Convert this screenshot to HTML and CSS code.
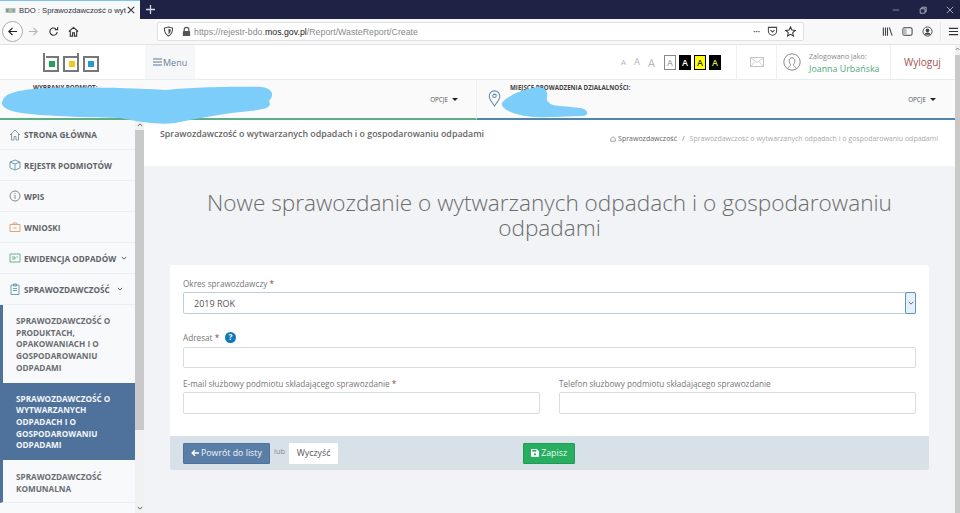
FILE: index.html
```html
<!DOCTYPE html>
<html lang="pl">
<head>
<meta charset="utf-8">
<title>BDO : Sprawozdawczość o wytwarzanych odpadach</title>
<link rel="stylesheet" href="styles.css">
</head>
<body>
<div class="browser-tabs">
  <div class="tab">
    <svg class="favicon" viewBox="0 0 12 6"><rect width="12" height="6" fill="#b7bcb8"/><rect x="1" y="1.5" width="2.5" height="3" fill="#5c9a78"/><rect x="4.7" y="1.5" width="2.5" height="3" fill="#d4c05c"/><rect x="8.5" y="1.5" width="2.5" height="3" fill="#6aa2c4"/></svg>
    <span class="tab-title">BDO : Sprawozdawczość o wyt</span>
    <svg class="tab-close" viewBox="0 0 10 10"><path d="M1 1l8 8M9 1l-8 8" stroke="#333" stroke-width="1.3"/></svg>
  </div>
  <svg class="new-tab" viewBox="0 0 10 10"><path d="M5 0v10M0 5h10" stroke="#d6d8e2" stroke-width="1.4"/></svg>
  <div class="window-controls">
    <svg viewBox="0 0 10 10"><path d="M1 5h8" stroke="#9a9dae" stroke-width="1"/></svg>
    <svg viewBox="0 0 10 10"><path d="M1.500 3.500h6v5.500h-6zM3.500 3.500v-2h5.500v5.500h-1.500" fill="none" stroke="#c6c8d4" stroke-width="1"/></svg>
    <svg viewBox="0 0 10 10"><path d="M1 1l8 8M9 1l-8 8" stroke="#c6c8d4" stroke-width="1"/></svg>
  </div>
</div>
<div class="browser-toolbar">
  <div class="nav-buttons">
    <span class="back-circle"><svg viewBox="0 0 12 12"><path d="M11 6H2M6 2L2 6l4 4" fill="none" stroke="#222" stroke-width="1.300"/></svg></span>
    <svg class="nav-icon" viewBox="0 0 12 12"><path d="M1 6h9M6 2l4 4-4 4" fill="none" stroke="#b5b5b5" stroke-width="1.200"/></svg>
    <svg class="nav-icon" viewBox="0 0 12 12"><path d="M10 6.500A4 4 0 1 1 8.500 3M10.500 1v3h-3" fill="none" stroke="#333" stroke-width="1.200"/></svg>
    <svg class="nav-icon" viewBox="0 0 12 12"><path d="M1 6l5-4.500L11 6M2.500 5.500V11h2.500V7.500h2V11h2.500V5.500" fill="none" stroke="#333" stroke-width="1.200"/></svg>
  </div>
  <div class="url-bar">
    <svg class="url-icon" viewBox="0 0 12 12"><path d="M6 1l4.500 1.200c0 4-1 6.800-4.500 8.800-3.500-2-4.500-4.800-4.500-8.800z" fill="none" stroke="#444" stroke-width="1.100"/><path d="M6 3l2.500.7c0 2.500-.7 3.900-2.500 5z" fill="#444"/></svg>
    <svg class="url-icon" viewBox="0 0 12 12"><path d="M3.500 5.500V4a2.500 2.500 0 0 1 5 0v1.500" fill="none" stroke="#555" stroke-width="1.300"/><rect x="2" y="5.500" width="8" height="5.500" rx="1" fill="#555"/></svg>
    <span class="url-text">https://rejestr-bdo.<b>mos.gov.pl</b>/Report/WasteReport/Create</span>
    <span class="url-end">
      <span class="dots">•••</span>
      <svg class="url-icon" viewBox="0 0 12 12"><path d="M1.500 1.500h9v4a4.500 4.500 0 0 1-9 0z" fill="none" stroke="#444" stroke-width="1.100"/><path d="M3.800 4.500L6 6.500l2.200-2" fill="none" stroke="#444" stroke-width="1.100"/></svg>
      <svg class="url-icon" viewBox="0 0 12 12"><path d="M6 1l1.500 3.400 3.700.4-2.800 2.400.8 3.600L6 9l-3.200 1.800.8-3.600L.8 4.800l3.700-.4z" fill="none" stroke="#333" stroke-width="1.100"/></svg>
    </span>
  </div>
  <div class="tool-icons">
    <svg viewBox="0 0 12 12"><path d="M1.500 1.500v9M3.800 1.500v9M6 1.500v9M8 1.500l3 9" fill="none" stroke="#444" stroke-width="1.200"/></svg>
    <svg viewBox="0 0 12 12"><rect x="1" y="2" width="10" height="8" rx="1.500" fill="none" stroke="#444" stroke-width="1.100"/><rect x="1.500" y="2.500" width="3.500" height="7" fill="#bbb"/></svg>
    <svg viewBox="0 0 12 12"><circle cx="6" cy="6" r="5" fill="none" stroke="#444" stroke-width="1"/><circle cx="6" cy="4.800" r="2" fill="#444"/><path d="M2.500 9.500a3.600 3 0 0 1 7 0z" fill="#444"/></svg>
    <i class="tool-sep"></i>
    <svg viewBox="0 0 12 12"><path d="M1 2.500h10M1 6h10M1 9.500h10" stroke="#333" stroke-width="1.300"/></svg>
  </div>
</div>

<div class="shell">
<div class="app">
<header class="app-header">
  <div class="logo-cell">
    <svg class="logo" viewBox="0 0 56 19">
      <path d="M1 0v18h14V4H3" fill="none" stroke="#777" stroke-width="2"/>
      <rect x="6" y="8" width="6" height="6" fill="#1fa35c"/>
      <path d="M35 0v18H21V4h14" fill="none" stroke="#777" stroke-width="2"/>
      <rect x="26" y="8" width="6" height="6" fill="#f7c81e"/>
      <rect x="41" y="4" width="14" height="14" fill="none" stroke="#777" stroke-width="2"/>
      <rect x="45" y="8" width="6" height="6" fill="#2799d6"/>
    </svg>
  </div>
  <div class="menu-btn">
    <svg viewBox="0 0 9 8"><path d="M0 1h9M0 4h9M0 7h9" stroke="#5f7994" stroke-width="1.200"/></svg>
    <span>Menu</span>
  </div>
  <div class="header-right">
    <div class="a11y">
      <span class="size-a s1">A</span><span class="size-a s2">A</span><span class="size-a s3">A</span>
      <span class="contrast c1">A</span><span class="contrast c2">A</span><span class="contrast c3">A</span><span class="contrast c4">A</span>
    </div>
    <div class="mail-cell">
      <svg viewBox="0 0 14 10"><rect x=".5" y=".5" width="13" height="9" fill="none" stroke="#c4c4c4"/><path d="M.5.500L7 5.500l6.500-5M.5 9.500L5 4.500M13.500 9.500L9 4.500" fill="none" stroke="#c4c4c4" stroke-width=".8"/></svg>
    </div>
    <div class="user-cell">
      <svg viewBox="0 0 18 18"><circle cx="9" cy="9" r="8.200" fill="none" stroke="#8a8a8a"/><path d="M5 15.500c.5-2 2.500-2.500 2.700-3.700-2.500-3-2-7 1.300-7s3.800 4 1.300 7c.2 1.200 2.200 1.700 2.700 3.700" fill="none" stroke="#8a8a8a"/></svg>
      <div class="user-text">
        <div class="user-label">Zalogowano jako:</div>
        <div class="user-name">Joanna Urbańska</div>
      </div>
    </div>
    <div class="logout">Wyloguj</div>
  </div>
</header>

<div class="context-row">
  <div class="context context-left">
    <span class="context-label label-subject">WYBRANY PODMIOT:</span>
    <span class="options">OPCJE <i class="caret"></i></span>
  </div>
  <div class="context context-right">
    <svg class="pin" viewBox="0 0 12 16"><path d="M6 15C3 10.500 1 8.500 1 5.800a5 5 0 0 1 10 0C11 8.500 9 10.500 6 15z" fill="none" stroke="#5f8fa8" stroke-width="1"/><circle cx="6" cy="5.500" r="1.600" fill="none" stroke="#5f8fa8"/></svg>
    <span class="context-label">MIEJSCE PROWADZENIA DZIAŁALNOŚCI:</span>
    <span class="options">OPCJE <i class="caret"></i></span>
  </div>
</div>

<div class="workspace">
  <nav class="sidebar">
    <a class="nav-item"><svg viewBox="0 0 12 12"><path d="M1 6l5-5 5 5M2.500 5v6h2.500V7.500h2V11h2.500V5" fill="none" stroke="#8a9aa8"/></svg><span>STRONA GŁÓWNA</span></a>
    <a class="nav-item"><svg viewBox="0 0 12 12"><path d="M6 1l5 2v6l-5 2-5-2V3zM1 3l5 2 5-2M6 5v6" fill="none" stroke="#6f9fb2"/></svg><span>REJESTR PODMIOTÓW</span></a>
    <a class="nav-item"><svg viewBox="0 0 12 12"><circle cx="6" cy="6" r="5" fill="none" stroke="#888"/><path d="M6 3v1M6 5v4" stroke="#888"/></svg><span>WPIS</span></a>
    <a class="nav-item"><svg viewBox="0 0 12 12"><path d="M1 3.500h10v7H1zM4 3.500V2h4v1.500M4.500 7h3" fill="none" stroke="#dda67c"/></svg><span>WNIOSKI</span></a>
    <a class="nav-item"><svg viewBox="0 0 12 12"><path d="M1 2h10v8H1zM3 5h3v2H3M7.500 5h1.500" fill="none" stroke="#6fb08c"/></svg><span>EWIDENCJA ODPADÓW</span><svg class="chev" viewBox="0 0 8 5"><path d="M1 1l3 3 3-3" fill="none" stroke="#555" stroke-width="1.300"/></svg></a>
    <a class="nav-item"><svg viewBox="0 0 12 12"><path d="M2 2h8v9.500H2zM4.500 1h3v2h-3zM4 5.500h4M4 7.500h4" fill="none" stroke="#6f9fb2"/></svg><span class="grow">SPRAWOZDAWCZOŚĆ</span><svg class="chev" viewBox="0 0 8 5"><path d="M1 1l3 3 3-3" fill="none" stroke="#555" stroke-width="1.300"/></svg></a>
    <div class="submenu">
      <a class="sub-item">SPRAWOZDAWCZOŚĆ O PRODUKTACH, OPAKOWANIACH I O GOSPODAROWANIU ODPADAMI</a>
      <a class="sub-item active">SPRAWOZDAWCZOŚĆ O WYTWARZANYCH ODPADACH I O GOSPODAROWANIU ODPADAMI</a>
      <a class="sub-item">SPRAWOZDAWCZOŚĆ KOMUNALNA</a>
    </div>
  </nav>
  <div class="side-scroll">
    <svg viewBox="0 0 8 5"><path d="M1 4l3-3 3 3" fill="none" stroke="#555" stroke-width="1.200"/></svg>
    <div class="side-thumb"></div>
    <svg viewBox="0 0 8 5"><path d="M1 1l3 3 3-3" fill="none" stroke="#555" stroke-width="1.200"/></svg>
  </div>
  <main class="content">
    <div class="page-bar">
      <div class="page-title">Sprawozdawczość o wytwarzanych odpadach i o gospodarowaniu odpadami</div>
      <div class="breadcrumb">
        <svg viewBox="0 0 8 8"><path d="M1 3.500L4 1l3 2.500V7H1z" fill="none" stroke="#666" stroke-width=".8"/></svg>
        <span class="crumb-link">Sprawozdawczość</span>
        <span class="crumb-sep">/</span>
        <span class="crumb-current">Sprawozdawczość o wytwarzanych odpadach i o gospodarowaniu odpadami</span>
      </div>
    </div>
    <div class="page-body">
      <h1>Nowe sprawozdanie o wytwarzanych odpadach i o gospodarowaniu odpadami</h1>
      <form class="card">
        <div class="card-fields">
          <div class="field">
            <label>Okres sprawozdawczy <em>*</em></label>
            <div class="select"><span>2019 ROK</span><span class="select-btn"><svg viewBox="0 0 8 5"><path d="M1 1l3 3 3-3" fill="none" stroke="#666" stroke-width="1.300"/></svg></span></div>
          </div>
          <div class="field field-addr">
            <label>Adresat <em>*</em><svg class="help" viewBox="0 0 12 12"><circle cx="6" cy="6" r="6" fill="#0f78b8"/><text x="6" y="9.200" text-anchor="middle" class="help-mark">?</text></svg></label>
            <div class="input"></div>
          </div>
          <div class="field-row">
            <div class="field">
              <label>E-mail służbowy podmiotu składającego sprawozdanie <em>*</em></label>
              <div class="input"></div>
            </div>
            <div class="field">
              <label>Telefon służbowy podmiotu składającego sprawozdanie</label>
              <div class="input"></div>
            </div>
          </div>
        </div>
        <div class="card-footer">
          <a class="btn btn-back"><svg viewBox="0 0 10 9"><path d="M10 4.500H2.500M5 1L1.500 4.500 5 8" fill="none" stroke="#fff" stroke-width="1.800"/></svg>Powrót do listy</a>
          <span class="or">lub</span>
          <a class="btn btn-clear">Wyczyść</a>
          <a class="btn btn-save"><svg viewBox="0 0 9 9"><path d="M0 1a1 1 0 0 1 1-1h5.500L9 2.500V8a1 1 0 0 1-1 1H1a1 1 0 0 1-1-1z" fill="#fff"/><rect x="1.500" y="1" width="4.500" height="2" fill="#27ae60"/><circle cx="4.500" cy="6" r="1.300" fill="#27ae60"/></svg>Zapisz</a>
        </div>
      </form>
    </div>
  </main>
</div>
</div>
<div class="page-scroll">
  <svg viewBox="0 0 8 5"><path d="M1 4l3-3 3 3" fill="none" stroke="#555" stroke-width="1.200"/></svg>
  <div class="page-thumb"></div>
</div>
</div>

<svg class="scribble" viewBox="0 0 960 130">
  <path d="M3 100C5 93 20 89 50 88C90 87 130 88 165 90C185 88 225 86 262 87C274 89 274 96 269 101C272 107 268 109 250 111C225 113 200 118 175 123C160 125 140 122 120 118C80 117 30 116 12 111C3 108 0 104 3 100Z" fill="#7ccdfa"/>
  <path d="M502 103C506 97 520 90 537 87C546 87 548 92 547 97C546 100 548 103 553 105C565 107 578 107 584 109C589 112 588 116 582 116C565 116 550 118 535 117C518 116 500 110 502 103Z" fill="#7ccdfa"/>
</svg>
</body>
</html>
```

FILE: styles.css
```css
* { box-sizing: border-box; }
html, body { margin: 0; padding: 0; }
body {
  position: relative;
  width: 960px;
  height: 513px;
  overflow: hidden;
  background: #fff;
  font-family: "Open Sans", "Liberation Sans", sans-serif;
  color: #555;
}
a { display: block; }

.browser-tabs {
  display: flex;
  align-items: center;
  height: 19px;
  background: #1e2346;
}
.tab {
  display: flex;
  align-items: center;
  width: 140px;
  height: 19px;
  padding: 1px 5px;
  background: #f7f8fa;
  border-top: 1px solid #7fc4ee;
  flex: none;
}
.favicon { width: 11px; height: 5px; margin-right: 3px; flex: none; }
.tab-title {
  flex: 1;
  white-space: nowrap;
  font-family: "Liberation Sans", sans-serif;
  font-size: 7.700px;
  color: #333;
}
.tab-close { width: 8px; height: 8px; flex: none; }
.new-tab { width: 9px; height: 9px; margin-left: 6px; flex: none; }
.window-controls {
  display: flex;
  gap: 19px;
  margin-left: auto;
  padding-right: 6px;
}
.window-controls svg { width: 8px; height: 8px; }

.browser-toolbar {
  display: flex;
  align-items: center;
  height: 26px;
  background: #f8f8f9;
  border-bottom: 1px solid #e3e3e5;
}
.nav-buttons {
  display: flex;
  align-items: center;
  gap: 6px;
  width: 157px;
  flex: none;
  padding-left: 2px;
}
.back-circle {
  display: flex;
  align-items: center;
  justify-content: center;
  width: 21px;
  height: 21px;
  margin-right: -1px;
  border: 1px solid #aaa;
  border-radius: 50%;
  background: #fff;
}
.back-circle svg { width: 11px; height: 11px; }
.nav-icon { width: 11px; height: 11px; margin-right: 3px; }
.url-bar {
  display: flex;
  align-items: center;
  gap: 7px;
  width: 647px;
  height: 19px;
  flex: none;
  padding: 0 4px 0 5px;
  background: #fff;
  border: 1px solid #e0e0e0;
  border-radius: 2px;
}
.url-icon { width: 11px; height: 11px; flex: none; }
.url-text {
  margin-left: -5px;
  font-family: "Liberation Sans", sans-serif;
  font-size: 8.800px;
  color: #8a8a8a;
  white-space: nowrap;
}
.url-text b { font-weight: 400; color: #222; }
.url-end {
  display: flex;
  align-items: center;
  gap: 7px;
  margin-left: auto;
  padding-right: 3px;
}
.dots { font-size: 6px; color: #444; letter-spacing: 0; }
.tool-icons {
  display: flex;
  align-items: center;
  gap: 9px;
  margin-left: 78px;
}
.tool-icons svg { width: 11px; height: 11px; flex: none; }
.tool-sep { width: 1px; height: 19px; background: #e6e6e6; margin: 0 -2px; }

.shell { display: flex; height: 468px; }
.app { width: 955px; flex: none; }

.app-header {
  display: flex;
  height: 35px;
  background: #fff;
  border-bottom: 1px solid #e9ecef;
}
.logo-cell {
  display: flex;
  align-items: center;
  justify-content: center;
  width: 145px;
}
.logo { width: 56px; height: 19px; margin-left: -3px; }
.menu-btn {
  display: flex;
  align-items: center;
  gap: 1px;
  width: 50px;
  padding-left: 8px;
  background: #f6f7f9;
  font-size: 9px;
  color: #6d8197;
}
.menu-btn svg { width: 9px; height: 8px; }
.header-right { display: flex; margin-left: auto; }
.a11y {
  display: flex;
  align-items: center;
  width: 122px;
  padding-left: 6px;
  border-right: 1px solid #f0f0f0;
}
.size-a { color: #b5b5b5; margin-right: 8px; line-height: 1; }
.s1 { font-size: 8px; }
.s2 { font-size: 9.500px; }
.s3 { font-size: 11px; margin-right: 9px; }
.contrast {
  display: flex;
  align-items: center;
  justify-content: center;
  width: 12px;
  height: 15px;
  margin-right: 3px;
  border: 1px solid #000;
  font-size: 9px;
  font-weight: 600;
  line-height: 1;
}
.c1 { background: #fff; border-color: #888; color: #aaa; }
.c2 { background: #000; color: #fff; }
.c3 { background: #ff0; color: #333; }
.c4 { background: #000; color: #d7e04a; }
.mail-cell {
  display: flex;
  align-items: center;
  justify-content: center;
  width: 40px;
  border-right: 1px solid #f0f0f0;
}
.mail-cell svg { width: 14px; height: 10px; }
.user-cell {
  display: flex;
  align-items: center;
  gap: 8px;
  width: 114px;
  padding-left: 6px;
  border-right: 1px solid #f0f0f0;
}
.user-cell svg { width: 18px; height: 18px; flex: none; }
.user-label { font-size: 7.100px; line-height: 12px; color: #888; }
.user-name { font-size: 8.900px; line-height: 13px; color: #4fa87a; white-space: nowrap; }
.logout {
  display: flex;
  align-items: center;
  padding-left: 13px;
  width: 64px;
  font-size: 10px;
  font-weight: 500;
  color: #a5504c;
  white-space: nowrap;
}

.context-row {
  display: flex;
  height: 40px;
  background: #fafafb;
}
.context {
  display: flex;
  align-items: flex-start;
  height: 40px;
  padding-top: 3px;
}
.context-left {
  width: 477px;
  padding-left: 33px;
  border-right: 1px solid #eef0f2;
  border-bottom: 2px solid #5cae86;
}
.context-right {
  width: 478px;
  padding-left: 33px;
  border-bottom: 2px solid #4f85ae;
}
.context-label {
  font-size: 6.200px;
  font-weight: 700;
  color: #444;
  white-space: nowrap;
}
.pin {
  width: 13px;
  height: 17px;
  margin: 7px 9px 0 -22px;
  flex: none;
}
.options {
  display: flex;
  align-items: center;
  gap: 4px;
  margin-left: auto;
  margin-top: 12px;
  padding-right: 18px;
  font-size: 6.300px;
  color: #555;
}
.context-right .options { padding-right: 19px; }
.caret {
  width: 0;
  height: 0;
  border-left: 3px solid transparent;
  border-right: 3px solid transparent;
  border-top: 3px solid #222;
}

.workspace {
  display: flex;
  height: 393px;
}
.sidebar {
  width: 135px;
  height: 393px;
  overflow: hidden;
  background: #f8f9fb;
  flex: none;
}
.nav-item {
  display: flex;
  align-items: center;
  gap: 3px;
  height: 31px;
  padding-left: 9px;
  padding-right: 12px;
  border-bottom: 1px solid #eceef1;
  font-size: 8.200px;
  font-weight: 700;
  color: #5f6368;
  white-space: nowrap;
}
.nav-item:first-child { height: 30px; }
.nav-item > svg:first-child { width: 12px; height: 12px; flex: none; }
.grow { flex: 1; }
.chev { width: 6px; height: 4px; flex: none; margin-left: 2px; }
.submenu {
  border-left: 3px solid #4e729c;
  border-bottom: 1px solid #eceef1;
  height: 198px;
}
.sub-item {
  padding: 10px 20px 0 13px;
  height: 77.500px;
  background: #f8f9fb;
  font-size: 8.200px;
  font-weight: 700;
  line-height: 11.700px;
  color: #6a6d72;
}
.sub-item:last-child { height: 42px; padding-top: 11px; }
.sub-item.active { background: #4e729c; color: #f4f6f9; }
.side-scroll {
  display: flex;
  flex-direction: column;
  align-items: center;
  width: 9px;
  height: 393px;
  padding: 3px 0;
  background: #f1f1f1;
  flex: none;
}
.side-scroll svg { width: 6px; height: 4px; flex: none; }
.side-thumb {
  width: 9px;
  height: 300px;
  margin-bottom: auto;
  margin-top: 3px;
  background: #c9c9c9;
}

.content {
  flex: 1;
  min-width: 0;
  background: #f1f3f6;
}
.page-bar {
  display: flex;
  justify-content: space-between;
  height: 46px;
  padding: 8px 17px 0 16px;
  background: #fff;
}
.page-title {
  font-size: 8.850px;
  font-weight: 600;
  color: #666;
  white-space: nowrap;
}
.breadcrumb {
  display: flex;
  align-items: center;
  gap: 2px;
  height: 21px;
  font-size: 7px;
  white-space: nowrap;
}
.breadcrumb svg { width: 6px; height: 6px; }
.crumb-link { color: #666; }
.crumb-sep { margin: 0 3px; color: #777; }
.crumb-current { color: #aaa; }
.page-body { padding: 24px 26px 0; }
h1 {
  width: 720px;
  margin: 0 auto;
  font-size: 22.600px;
  font-weight: 300;
  line-height: 25px;
  text-align: center;
  color: #6c6c6c;
}
.card {
  margin-top: 25px;
  background: #fff;
  border-radius: 2px;
}
.card-fields { padding: 13px 13px 0; height: 171px; }
label {
  display: block;
  font-size: 8.200px;
  line-height: 12px;
  color: #777;
  white-space: nowrap;
}
label em { font-style: normal; color: #8a4a4a; }
.select, .input {
  height: 22px;
  margin-top: 2px;
  background: #fff;
  border: 1px solid #d8dde2;
  border-radius: 2px;
}
.select {
  display: flex;
  align-items: center;
  justify-content: space-between;
  padding-left: 10px;
  font-size: 9px;
  color: #555;
  border-color: #bcd0dc;
}
.select-btn {
  display: flex;
  align-items: center;
  justify-content: center;
  align-self: stretch;
  width: 11px;
  margin: -1px;
  background: #e6f0fa;
  border: 1px solid #5d94b8;
  border-radius: 2px;
}
.select-btn svg { width: 6px; height: 4px; }
.field-addr { margin-top: 18px; }
.field-addr .input { height: 21px; margin-top: 3px; }
.help { width: 11px; height: 11px; margin-left: 6px; vertical-align: -2px; }
.help-mark { font-size: 9px; font-weight: 700; fill: #fff; }
.field-row {
  display: grid;
  grid-template-columns: 357px 357px;
  gap: 19px;
  margin-top: 10px;
}
.card-footer {
  display: flex;
  align-items: center;
  height: 34px;
  padding: 0 13px;
  background: #d9e1e8;
  border-radius: 0 0 2px 2px;
}
.btn {
  display: flex;
  align-items: center;
  gap: 2px;
  height: 21px;
  border-radius: 1px;
  font-size: 8.800px;
  white-space: nowrap;
}
.btn svg { width: 8px; height: 8px; }
.btn-back {
  width: 87px;
  padding-left: 7px;
  background: #5a7ea8;
  border: 1px solid #4e729c;
  color: #f2f5f9;
}
.or { margin: 0 4px 5px; font-size: 7.500px; color: #888; }
.btn-clear {
  justify-content: center;
  width: 49px;
  background: #fff;
  color: #555;
}
.btn-save {
  justify-content: center;
  width: 52px;
  margin-left: 185px;
  background: #27ae60;
  border: 1px solid #219a54;
  color: #eef9f2;
}
.page-scroll {
  display: flex;
  flex-direction: column;
  align-items: flex-start;
  width: 5px;
  height: 468px;
  padding-top: 2px;
  background: #f1f1f1;
  flex: none;
}
.page-scroll svg { width: 5px; height: 4px; flex: none; }
.page-thumb {
  width: 5px;
  flex: 1;
  margin-top: 4px;
  background: #c9c9c9;
}
.scribble {
  position: absolute;
  left: 0;
  top: 0;
  width: 960px;
  height: 130px;
}
```
